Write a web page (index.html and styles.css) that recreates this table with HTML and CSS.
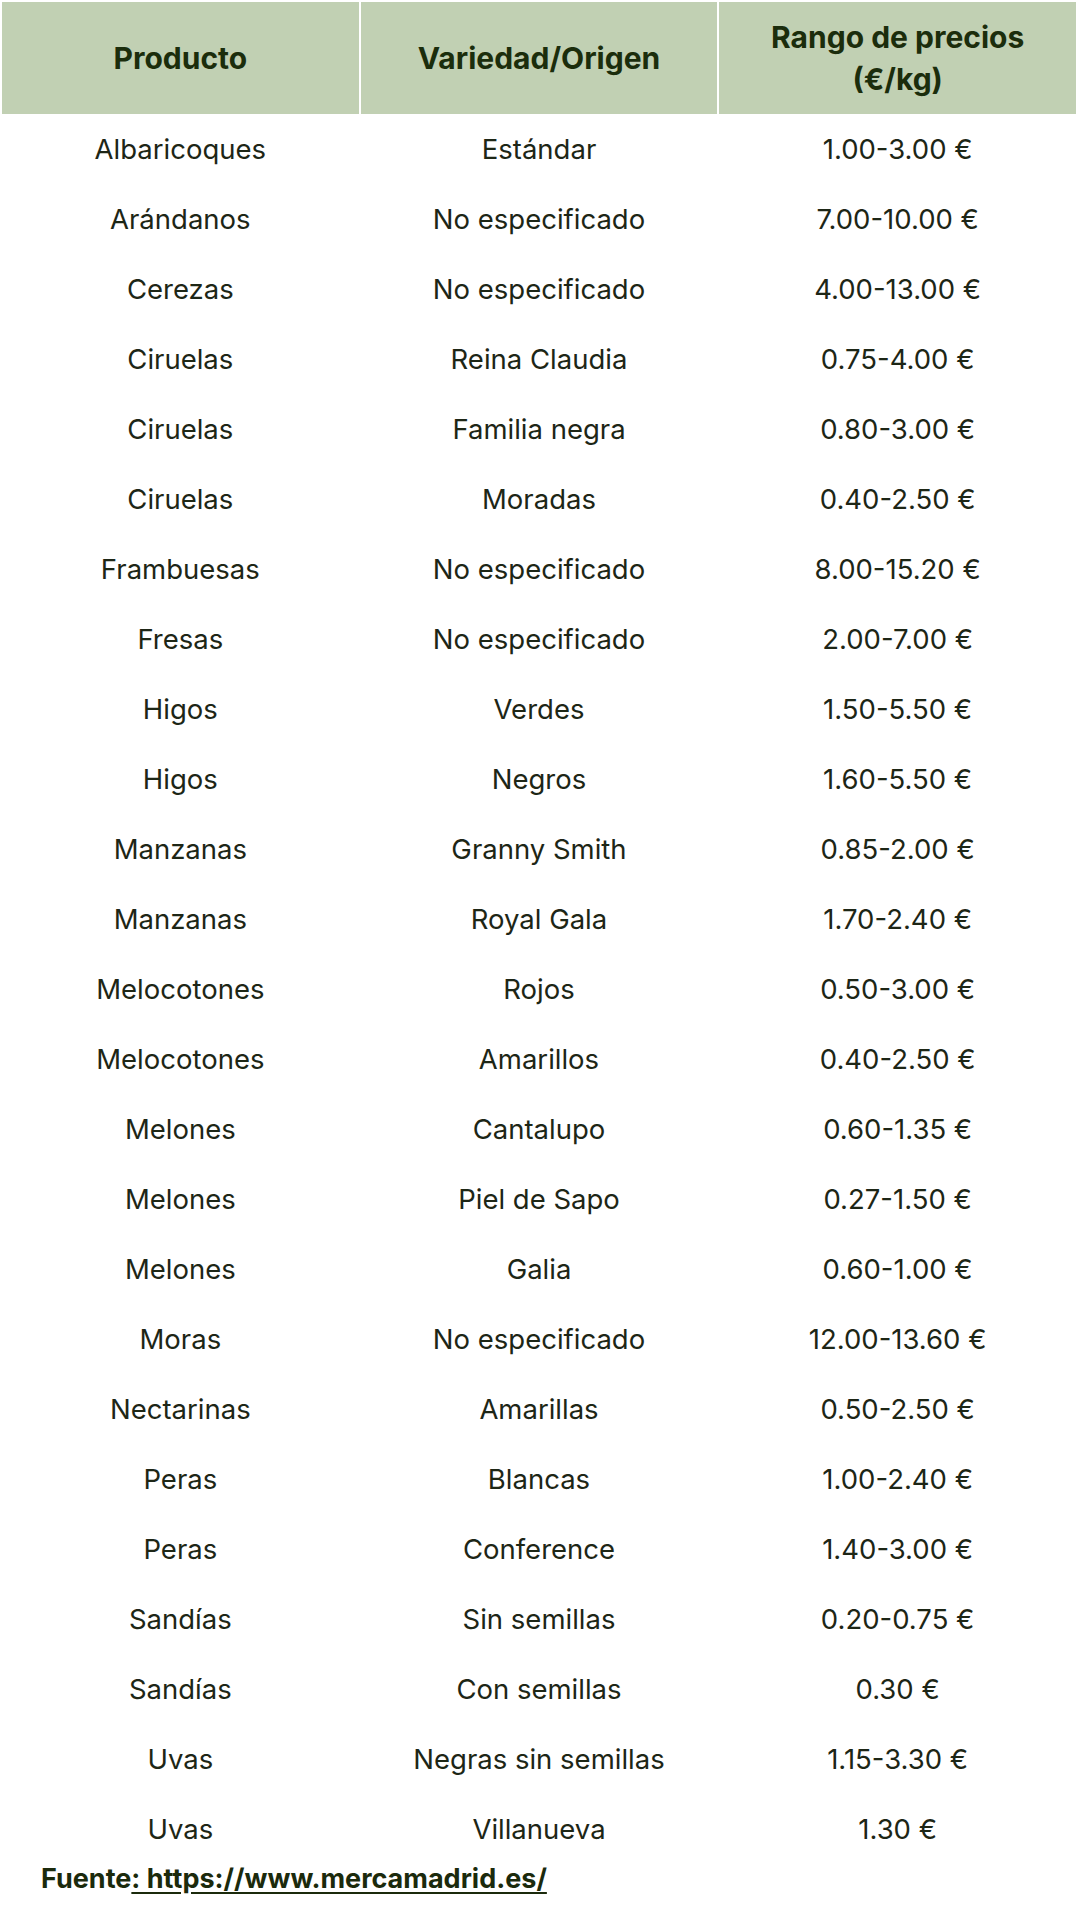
FILE: index.html
```html
<!DOCTYPE html>
<html lang="es">
<head>
<meta charset="utf-8">
<link rel="stylesheet" href="styles.css">
</head>
<body>
<div class="page">
  <div class="table">
    <div class="th">Producto</div>
    <div class="th">Variedad/Origen</div>
    <div class="th">Rango de precios<br>(€/kg)</div>

    <div class="td">Albaricoques</div><div class="td">Estándar</div><div class="td">1.00-3.00 €</div>
    <div class="td">Arándanos</div><div class="td">No especificado</div><div class="td">7.00-10.00 €</div>
    <div class="td">Cerezas</div><div class="td">No especificado</div><div class="td">4.00-13.00 €</div>
    <div class="td">Ciruelas</div><div class="td">Reina Claudia</div><div class="td">0.75-4.00 €</div>
    <div class="td">Ciruelas</div><div class="td">Familia negra</div><div class="td">0.80-3.00 €</div>
    <div class="td">Ciruelas</div><div class="td">Moradas</div><div class="td">0.40-2.50 €</div>
    <div class="td">Frambuesas</div><div class="td">No especificado</div><div class="td">8.00-15.20 €</div>
    <div class="td">Fresas</div><div class="td">No especificado</div><div class="td">2.00-7.00 €</div>
    <div class="td">Higos</div><div class="td">Verdes</div><div class="td">1.50-5.50 €</div>
    <div class="td">Higos</div><div class="td">Negros</div><div class="td">1.60-5.50 €</div>
    <div class="td">Manzanas</div><div class="td">Granny Smith</div><div class="td">0.85-2.00 €</div>
    <div class="td">Manzanas</div><div class="td">Royal Gala</div><div class="td">1.70-2.40 €</div>
    <div class="td">Melocotones</div><div class="td">Rojos</div><div class="td">0.50-3.00 €</div>
    <div class="td">Melocotones</div><div class="td">Amarillos</div><div class="td">0.40-2.50 €</div>
    <div class="td">Melones</div><div class="td">Cantalupo</div><div class="td">0.60-1.35 €</div>
    <div class="td">Melones</div><div class="td">Piel de Sapo</div><div class="td">0.27-1.50 €</div>
    <div class="td">Melones</div><div class="td">Galia</div><div class="td">0.60-1.00 €</div>
    <div class="td">Moras</div><div class="td">No especificado</div><div class="td">12.00-13.60 €</div>
    <div class="td">Nectarinas</div><div class="td">Amarillas</div><div class="td">0.50-2.50 €</div>
    <div class="td">Peras</div><div class="td">Blancas</div><div class="td">1.00-2.40 €</div>
    <div class="td">Peras</div><div class="td">Conference</div><div class="td">1.40-3.00 €</div>
    <div class="td">Sandías</div><div class="td">Sin semillas</div><div class="td">0.20-0.75 €</div>
    <div class="td">Sandías</div><div class="td">Con semillas</div><div class="td">0.30 €</div>
    <div class="td">Uvas</div><div class="td">Negras sin semillas</div><div class="td">1.15-3.30 €</div>
    <div class="td">Uvas</div><div class="td">Villanueva</div><div class="td">1.30 €</div>
  </div>
  <p class="source">Fuente<span class="link">: https://www.mercamadrid.es/ </span></p>
</div>
</body>
</html>
```

FILE: styles.css
```css
html, body {
  margin: 0;
  padding: 0;
  background: #ffffff;
}

body {
  font-family: Inter, "Noto Sans", sans-serif;
  color: #1d2616;
}

.page {
  width: 1080px;
  height: 1920px;
  padding: 2px 4px 0 2px;
  box-sizing: border-box;
}

.table {
  display: grid;
  grid-template-columns: repeat(3, 1fr);
  column-gap: 2px;
}

.th {
  height: 112px;
  background: #c1d0b3;
  color: #1b2d0c;
  font-weight: 700;
  font-size: 30px;
  line-height: 42px;
  display: flex;
  align-items: center;
  justify-content: center;
  text-align: center;
}

.td {
  height: 70px;
  font-size: 27.5px;
  display: flex;
  align-items: center;
  justify-content: center;
  text-align: center;
}

.source {
  margin: 0 0 0 39px;
  font-size: 27px;
  line-height: 30px;
  font-weight: 700;
  color: #1b2a0c;
}

.link {
  text-decoration: underline;
  text-underline-offset: 4px;
}
```
